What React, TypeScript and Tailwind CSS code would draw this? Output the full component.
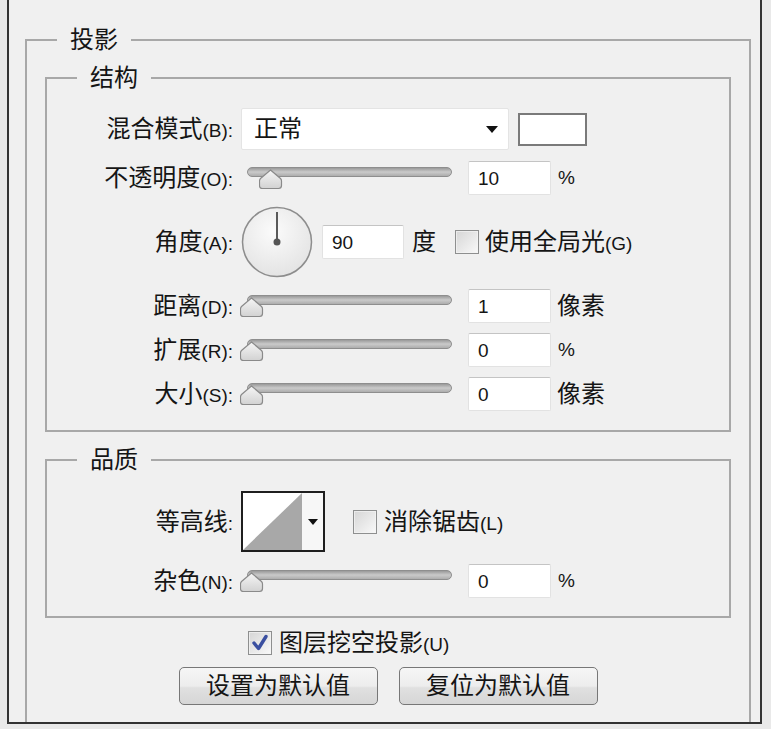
import React from "react";

function Label({ text, hint }: { text: string; hint?: string }) {
  return (
    <div className="w-[186px] shrink-0 text-right text-[24px] leading-none">
      {text}
      <span className="text-[19px]">{hint ? `(${hint}):` : ":"}</span>
    </div>
  );
}

function NumBox({ value, w = 83 }: { value: string; w?: number }) {
  return (
    <div
      className="flex h-[34px] shrink-0 items-center rounded-[2px] border border-[#e2e2e2] border-t-[#c4c4c4] bg-white pl-[9px] text-[19px] leading-none"
      style={{ width: w }}
    >
      {value}
    </div>
  );
}

function Slider({ value }: { value: number }) {
  const left = Math.round((value / 100) * 188);
  return (
    <div className="relative ml-[7px] h-[24px] w-[212px] shrink-0">
      <div className="absolute left-[7px] right-0 top-[1px] h-[10px] rounded-full border border-[#8e8e8e] bg-gradient-to-b from-[#9a9a9a] via-[#cacaca] to-[#adadad]" />
      <svg className="absolute top-[3px]" style={{ left }} width="24" height="21" viewBox="0 0 24 21">
        <defs>
          <linearGradient id={`th${value}`} x1="0" y1="0" x2="0" y2="1">
            <stop offset="0" stopColor="#f6f6f6" />
            <stop offset="1" stopColor="#d2d2d2" />
          </linearGradient>
        </defs>
        <path
          d="M11.5 1 L21.5 9.5 Q22.5 10.5 22.5 12 V16.5 Q22.5 19.5 19.5 19.5 H3.5 Q0.5 19.5 0.5 16.5 V12 Q0.5 10.5 1.5 9.5 Z"
          fill={`url(#th${value})`}
          stroke="#8a8a8a"
          strokeWidth="1.2"
        />
      </svg>
    </div>
  );
}

function CheckBox({ checked = false }: { checked?: boolean }) {
  return (
    <div className="flex h-[24px] w-[24px] shrink-0 items-center justify-center border-[1.5px] border-[#8e8f8f] bg-gradient-to-br from-[#d6d6d6] to-[#f9f9f9]">
      <div className="flex h-full w-full items-center justify-center border border-[#f3f3f3]/70">
        {checked && (
          <svg width="20" height="20" viewBox="0 0 20 20">
            <path d="M4 10 L8.5 15.5 L16 3.5" fill="none" stroke="#3a4fa0" strokeWidth="3.4" strokeLinejoin="round" strokeLinecap="round" />
          </svg>
        )}
      </div>
    </div>
  );
}

function Legend({ text }: { text: string }) {
  return <legend className="ml-[30px] px-[13px] text-[24px] leading-[24px]">{text}</legend>;
}

function SliderRow({
  label,
  hint,
  value,
  shown,
  unit,
  mt,
}: {
  label: string;
  hint: string;
  value: number;
  shown?: string;
  unit: string;
  mt: string;
}) {
  return (
    <div className={`flex h-[34px] items-center ${mt}`}>
      <Label text={label} hint={hint} />
      <Slider value={value} />
      <div className="ml-[16px]">
        <NumBox value={shown ?? String(value)} />
      </div>
      <span className={unit === "%" ? "ml-[7px] text-[19px]" : "ml-[6px] text-[24px]"}>{unit}</span>
    </div>
  );
}

function Dial() {
  return (
    <svg width="72" height="72" viewBox="0 0 72 72" className="shrink-0">
      <defs>
        <radialGradient id="dial" cx="0.45" cy="0.35" r="0.7">
          <stop offset="0" stopColor="#fbfbfb" />
          <stop offset="1" stopColor="#e2e2e2" />
        </radialGradient>
      </defs>
      <circle cx="36" cy="36" r="34.5" fill="url(#dial)" stroke="#8d8d8d" strokeWidth="1.5" />
      <line x1="36" y1="6" x2="36" y2="36" stroke="#5a5a5a" strokeWidth="2" />
      <circle cx="36" cy="36" r="3.5" fill="#555" />
    </svg>
  );
}

function Contour() {
  return (
    <div className="flex h-[61px] w-[84px] shrink-0">
      <div className="h-full w-[61px] border-y-2 border-l-2 border-[#1e1e1e] bg-white">
        <svg width="59" height="57" viewBox="0 0 59 57" className="block">
          <polygon points="0,57 59,0 59,57" fill="#a8a8a8" />
        </svg>
      </div>
      <div className="flex h-full flex-1 items-center justify-center border-y-2 border-r-2 border-[#1e1e1e] bg-[#f7f7f7]">
        <svg width="10" height="6" viewBox="0 0 10 6">
          <polygon points="0,0 10,0 5,6" fill="#111" />
        </svg>
      </div>
    </div>
  );
}

function Button({ text }: { text: string }) {
  return (
    <div className="flex h-[38px] w-[199px] items-center justify-center rounded-[5px] border-[1.5px] border-[#777] bg-[linear-gradient(180deg,#f6f6f6_0%,#ededed_50%,#e0e0e0_55%,#d6d6d6_100%)] text-[24px] leading-none">
      {text}
    </div>
  );
}

export default function App() {
  return (
    <div className="h-[729px] w-[771px] overflow-hidden bg-[#e9e9e9] font-['Liberation_Sans','Noto_Sans_CJK_SC',sans-serif] text-[#151515]">
      <div className="ml-[7px] h-[724px] w-[755px] overflow-hidden border-x-2 border-b-2 border-[#333] bg-[#f0f0f0] pt-[28px]">
        <fieldset className="ml-[16px] mr-[9px] border-2 border-[#a8a8a8] p-0 pb-[40px]">
          <Legend text="投影" />
          <div className="px-[18px] pt-[14px]">
            <fieldset className="border-2 border-[#a8a8a8] p-0">
              <Legend text="结构" />
              <div className="flex flex-col pb-[19px]">
                <div className="mt-[18px] flex h-[42px] items-center">
                  <Label text="混合模式" hint="B" />
                  <div className="relative ml-[8px] flex h-[42px] w-[268px] items-center rounded-[2px] border border-[#e4e4e4] bg-white pl-[12px] text-[24px] leading-none">
                    正常
                    <svg className="absolute right-[10px] top-[17px]" width="12" height="7" viewBox="0 0 12 7">
                      <polygon points="0,0 12,0 6,7" fill="#111" />
                    </svg>
                  </div>
                  <div className="ml-[9px] h-[33px] w-[69px] border-2 border-[#7a7a7a] bg-white" />
                </div>
                <SliderRow label="不透明度" hint="O" value={10} unit="%" mt="mt-[11px]" />
                <div className="mt-[12px] flex h-[70px] items-center">
                  <Label text="角度" hint="A" />
                  <div className="ml-[8px]">
                    <Dial />
                  </div>
                  <div className="ml-[9px]">
                    <NumBox value="90" w={82} />
                  </div>
                  <span className="ml-[8px] text-[24px] leading-none">度</span>
                  <div className="ml-[19px]">
                    <CheckBox />
                  </div>
                  <span className="ml-[6px] text-[24px] leading-none">
                    使用全局光<span className="text-[19px]">(G)</span>
                  </span>
                </div>
                <SliderRow label="距离" hint="D" value={0} shown="1" unit="像素" mt="mt-[12px]" />
                <SliderRow label="扩展" hint="R" value={0} unit="%" mt="mt-[10px]" />
                <SliderRow label="大小" hint="S" value={0} unit="像素" mt="mt-[10px]" />
              </div>
            </fieldset>

            <fieldset className="mt-[16px] border-2 border-[#a8a8a8] p-0">
              <Legend text="品质" />
              <div className="flex flex-col pb-[18px]">
                <div className="mt-[19px] flex h-[61px] items-center">
                  <Label text="等高线" />
                  <div className="ml-[8px]">
                    <Contour />
                  </div>
                  <div className="ml-[28px]">
                    <CheckBox />
                  </div>
                  <span className="ml-[7px] text-[24px] leading-none">
                    消除锯齿<span className="text-[19px]">(L)</span>
                  </span>
                </div>
                <SliderRow label="杂色" hint="N" value={0} unit="%" mt="mt-[12px]" />
              </div>
            </fieldset>
          </div>

          <div className="mt-[12px] flex h-[25px] items-center pl-[221px]">
            <CheckBox checked />
            <span className="ml-[7px] text-[24px] leading-none">
              图层挖空投影<span className="text-[19px]">(U)</span>
            </span>
          </div>
          <div className="mt-[12px] flex justify-center gap-[21px]">
            <Button text="设置为默认值" />
            <Button text="复位为默认值" />
          </div>
        </fieldset>
      </div>
    </div>
  );
}
